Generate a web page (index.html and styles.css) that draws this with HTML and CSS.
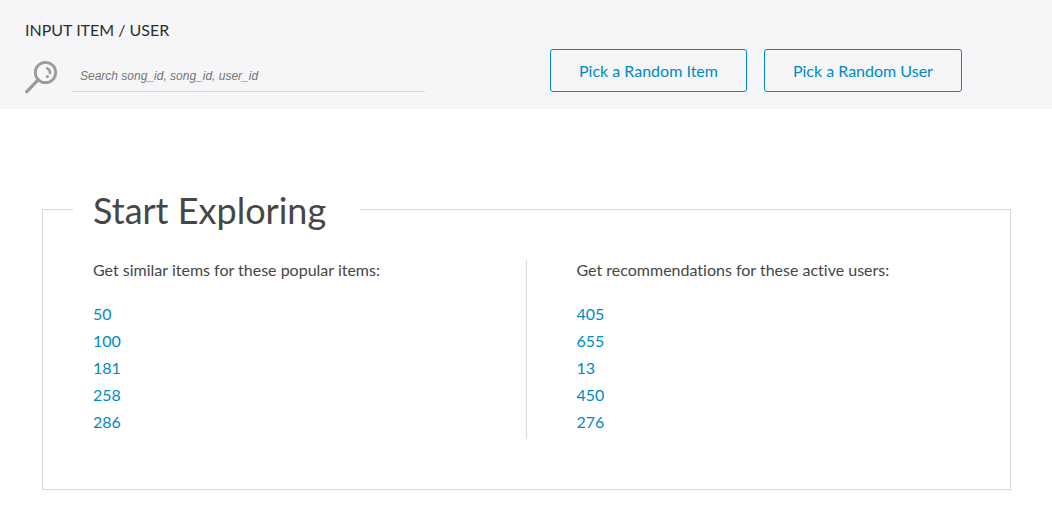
FILE: index.html
```html
<!DOCTYPE html>
<html lang="en">
<head>
<meta charset="utf-8">
<meta name="viewport" content="width=device-width, initial-scale=1">
<title>Start Exploring</title>
<link rel="stylesheet" href="styles.css">
</head>
<body>
<header class="toolbar">
  <form class="search">
    <label class="search-label" for="query">INPUT ITEM / USER</label>
    <div class="search-row">
      <svg class="search-icon" viewBox="0 0 34 34" fill="none" stroke="#9b9b9b" stroke-linecap="round" aria-hidden="true">
        <circle cx="20.5" cy="12.5" r="10.2" stroke-width="2.8"/>
        <path d="M12.6 20.4 1.6 31.8" stroke-width="3.2"/>
        <path d="M22.2 8.4a4.8 4.8 0 0 1 2.8 4.6" stroke-width="2.6"/>
        <circle cx="22.4" cy="16.6" r="1.6" fill="#9b9b9b" stroke="none"/>
      </svg>
      <input class="search-input" id="query" type="text" placeholder="Search song_id, song_id, user_id">
    </div>
  </form>
  <div class="actions">
    <button class="pick" type="button">Pick a Random Item</button>
    <button class="pick" type="button">Pick a Random User</button>
  </div>
</header>
<main class="explore">
  <h1 class="explore-title">Start Exploring</h1>
  <div class="columns">
    <section class="column">
      <p class="column-intro">Get similar items for these popular items:</p>
      <ul class="ids">
        <li><a href="#item-50">50</a></li>
        <li><a href="#item-100">100</a></li>
        <li><a href="#item-181">181</a></li>
        <li><a href="#item-258">258</a></li>
        <li><a href="#item-286">286</a></li>
      </ul>
    </section>
    <section class="column">
      <p class="column-intro">Get recommendations for these active users:</p>
      <ul class="ids">
        <li><a href="#user-405">405</a></li>
        <li><a href="#user-655">655</a></li>
        <li><a href="#user-13">13</a></li>
        <li><a href="#user-450">450</a></li>
        <li><a href="#user-276">276</a></li>
      </ul>
    </section>
  </div>
</main>
</body>
</html>
```
FILE: styles.css
```css
* {
  box-sizing: border-box;
}

body {
  margin: 0;
  background: #fff;
  color: #464646;
  font: 16px/20px Lato, sans-serif;
  font-variant-ligatures: none;
}

.toolbar {
  display: grid;
  grid-template-columns: 400px 1fr;
  column-gap: 125px;
  align-items: end;
  padding: 20px 25px 17px;
  background: #f6f6f9;
}

.search-label {
  display: block;
  color: #2d2d2d;
}

.search-row {
  display: flex;
  align-items: end;
  gap: 13px;
  margin-top: 20px;
}

.search-icon {
  flex: none;
  width: 34px;
  height: 34px;
  margin-bottom: -2px;
}

.search-input {
  flex: 1;
  min-width: 0;
  height: 32px;
  padding: 0 8px;
  border: 0;
  border-bottom: 1px solid #d9d9dc;
  background: transparent;
  color: #464646;
  font: italic 12px "Liberation Sans", Arial, sans-serif;
}

.search-input::placeholder {
  color: #757575;
}

.actions {
  display: flex;
  gap: 17px;
}

.pick {
  padding: 11px 28px 10px;
  border: 1px solid #008ac5;
  border-radius: 3px;
  background: transparent;
  color: #008ac5;
  font: 16px/20px Lato, sans-serif;
  white-space: nowrap;
}

.explore {
  margin: 100px 41px 20px 42px;
  padding: 0 50px 50px;
  border: 1px solid #d1dbe3;
}

.explore-title {
  width: fit-content;
  margin: -22px 0 28px -20px;
  padding: 0 34px 0 20px;
  background: #fff;
  font-size: 36px;
  font-weight: 400;
  line-height: 44px;
}

.columns {
  display: grid;
  grid-template-columns: 1fr 1fr;
}

.column {
  padding-bottom: 4px;
}

.column:first-child {
  border-right: 1px solid #d9d9d9;
}

.column:last-child {
  padding-left: 50px;
}

.column-intro {
  margin: 0 0 20px;
}

.ids {
  margin: 0;
  padding: 0;
  list-style: none;
  line-height: 27px;
}

.ids a {
  color: #008ac5;
  text-decoration: none;
}
```
